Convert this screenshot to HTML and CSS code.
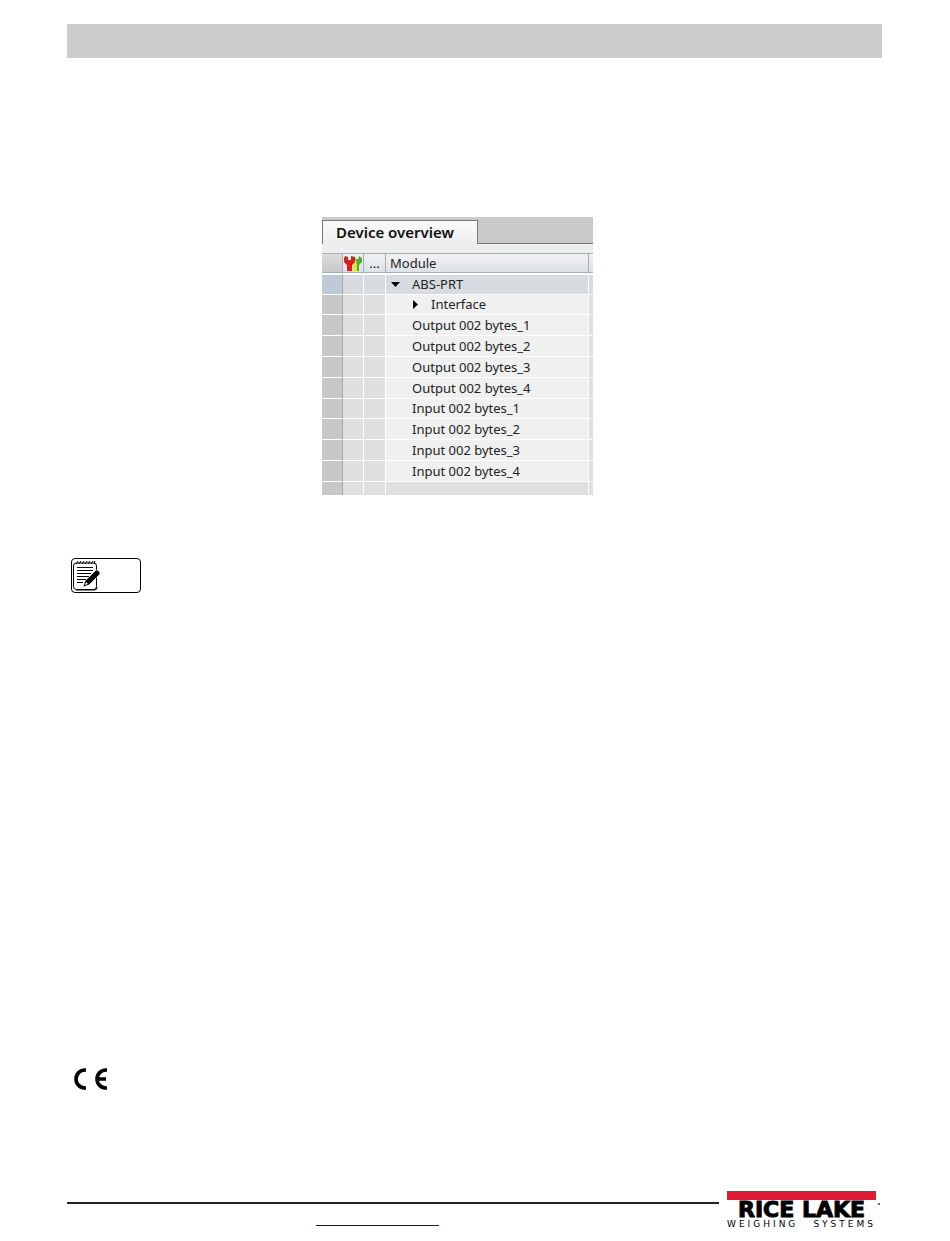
FILE: index.html
```html
<!DOCTYPE html>
<html lang="en">
<head>
  <meta charset="utf-8">
  <title>Device overview</title>
  <link rel="stylesheet" href="styles.css">
</head>
<body>
<header class="title-bar"></header>

<main>
  <section class="device">
    <div class="tabs">
      <button class="tab" type="button">Device overview</button>
    </div>
    <table class="modules">
      <thead>
        <tr>
          <th class="col-mark"></th>
          <th class="col-state">
            <svg class="wrenches" viewBox="0 0 18 17">
              <path fill="#4fae32" d="M10 1l2 3h2l1-3 3 2v4l-3 3v6h-4v-6L9 7z"/>
              <path fill="#e8e23a" d="M9 3l3 2 1 4v7H9z"/>
              <path fill="#d3201f" d="M1 1l3 1v3h3V1l4 1v5L8 10v6H3v-6L0 7V3z"/>
            </svg>
          </th>
          <th class="col-more">...</th>
          <th class="col-module">Module</th>
          <th class="col-end"></th>
        </tr>
      </thead>
      <tbody>
        <tr class="selected"><td></td><td></td><td></td><td class="name root"><svg class="arrow" viewBox="0 0 9 9"><path d="M0 2h9L4.500 7z"/></svg>ABS-PRT</td><td></td></tr>
        <tr><td></td><td></td><td></td><td class="name child"><svg class="arrow" viewBox="0 0 9 9"><path d="M2 0v9l5-4.500z"/></svg>Interface</td><td></td></tr>
        <tr><td></td><td></td><td></td><td class="name">Output 002 bytes_1</td><td></td></tr>
        <tr><td></td><td></td><td></td><td class="name">Output 002 bytes_2</td><td></td></tr>
        <tr><td></td><td></td><td></td><td class="name">Output 002 bytes_3</td><td></td></tr>
        <tr><td></td><td></td><td></td><td class="name">Output 002 bytes_4</td><td></td></tr>
        <tr><td></td><td></td><td></td><td class="name">Input 002 bytes_1</td><td></td></tr>
        <tr><td></td><td></td><td></td><td class="name">Input 002 bytes_2</td><td></td></tr>
        <tr><td></td><td></td><td></td><td class="name">Input 002 bytes_3</td><td></td></tr>
        <tr><td></td><td></td><td></td><td class="name">Input 002 bytes_4</td><td></td></tr>
        <tr class="empty"><td></td><td></td><td></td><td></td><td></td></tr>
      </tbody>
    </table>
  </section>

  <div class="note">
    <svg class="notepad" viewBox="0 0 30 33">
      <rect x="1.500" y="4" width="23" height="26.500" rx="3" fill="#fff" stroke="#000"/>
      <path d="M4 31h19q2 0 2-3" fill="none" stroke="#000"/>
      <path d="M4 5l2-3M7 5l2-3M10 5l2-3M13 5l2-3M16 5l2-3M19 5l2-3M22 5l1-3" stroke="#000"/>
      <path d="M5 8.500h16M5 11.500h16M5 14.500h14M5 17.500h12M5 20.500h9M5 23.500h6" stroke="#000"/>
      <path d="M11 28l2-6L24 11q4 0 4 4L17 26z" fill="#000" stroke="#fff" stroke-width="0.600"/>
      <path d="M13 26l1-3 2 2z" fill="#fff"/>
    </svg>
  </div>

  <svg class="ce-mark" viewBox="0 0 36 22" role="img" aria-label="CE">
    <path d="M14 2h-1a9 9 0 0 0 0 18h1M35 2h-1a9 9 0 0 0 0 18h1M26 11h8" fill="none" stroke="#000" stroke-width="3.600"/>
  </svg>
</main>

<footer class="footer">
  <div class="rule">
    <a class="site-link" href="#" aria-label="Website"></a>
  </div>
  <div class="logo">
    <div class="logo-bar"></div>
    <div class="logo-name">RICE LAKE</div>
    <div class="logo-sub"><span>WEIGHING</span><span>SYSTEMS</span></div>
    <span class="logo-dot"></span>
  </div>
</footer>
</body>
</html>
```
FILE: styles.css
```css
body {
    margin: 0;
    padding: 24px 68px 0 67px;
    background-color: white;
    font-family: "Noto Sans", "Open Sans", sans-serif;
    font-size: 13px;
    color: #222;
}

.title-bar {
    height: 34px;
    background-color: #ccc;
}

main {
    padding-right: 34px;
}

/* Device overview panel */
.device {
    width: 271px;
    margin: 159px auto 0;
    background-color: #eee;
}

.tabs {
    display: flex;
    height: 27px;
    padding-top: 3px;
    box-sizing: border-box;
    border-bottom: 1px solid #777;
    background-color: #cacaca;
}

.tab {
    height: 24px;
    box-sizing: border-box;
    width: 156px;
    padding: 0 0 2px 13px;
    border: 1px solid #777;
    border-bottom: 0;
    background: linear-gradient(#fafafa, #eee);
    color: #111;
    font: 600 15px/20px "Noto Sans", sans-serif;
    text-align: left;
    white-space: nowrap;
}

.modules {
    width: 100%;
    margin-top: 9px;
    border-collapse: separate;
    border-spacing: 0;
    table-layout: fixed;
}

.modules th {
    height: 20px;
    box-sizing: border-box;
    padding: 0;
    border: solid #a4adb5;
    border-width: 1px 1px 1px 0;
    background: linear-gradient(#f2f2f3, #dde2e9);
    font-weight: normal;
    line-height: 18px;
    text-align: left;
}

.modules .col-mark {
    width: 21px;
    background: linear-gradient(#dcdcdc, #c8c8c8);
}

.modules .col-state {
    width: 21px;
}

.modules .col-more {
    width: 22px;
    text-align: center;
}

.modules .col-module {
    padding-left: 4px;
}

.modules .col-end {
    width: 4px;
    border-right: 0;
}

.wrenches {
    display: block;
    width: 18px;
    height: 17px;
    margin: 0 auto;
}

.modules td {
    height: 21px;
    box-sizing: border-box;
    padding: 0;
    border: solid white;
    border-width: 0 1px 1px 0;
    background-color: #dfdfdf;
    line-height: 19px;
}

.modules td:first-child {
    border-right-color: #aaa;
    background-color: #c8c8c8;
}

.modules td:last-child {
    border-right: 0;
}

.modules tr:nth-child(5n+2) td {
    height: 20px;
}

.modules .name {
    padding-left: 26px;
    background-color: #f0f0f0;
    white-space: nowrap;
}

.modules .root {
    padding-left: 5px;
}

.modules .child {
    padding-left: 25px;
}

.arrow {
    width: 9px;
    height: 9px;
    margin-right: 12px;
}

.child .arrow {
    margin-right: 11px;
}

.modules .selected td {
    height: 22px;
    border-top: 2px solid white;
    background-color: #d8dce1;
}

.modules .selected td:first-child {
    background-color: #bfcad8;
}

.modules .empty td {
    height: 13px;
    border-bottom: 0;
}

/* Note box and CE mark */
.note {
    width: 70px;
    height: 35px;
    box-sizing: border-box;
    margin: 63px 0 0 4px;
    border: 1px solid black;
    border-radius: 4px;
}

.notepad {
    display: block;
    width: 30px;
    height: 33px;
}

.ce-mark {
    display: block;
    width: 36px;
    height: 22px;
    margin: 475px 0 0 5px;
}

.footer {
    display: flex;
    gap: 8px;
    margin-top: 101px;
}

.rule {
    flex: 1;
    margin-top: 11px;
    border-top: 2px solid #222;
}

.site-link {
    display: block;
    width: 123px;
    height: 21px;
    margin-left: 249px;
    border-bottom: 1px solid #00f;
}

.logo {
    position: relative;
    width: 149px;
    margin-right: 6px;
    color: black;
}

.logo-bar {
    height: 9px;
    background-color: #df1a32;
}

.logo-name {
    font: bold 22px/20px "DejaVu Sans", sans-serif;
    -webkit-text-stroke: 1px black;
    white-space: nowrap;
    text-align: center;
}

.logo-sub {
    display: flex;
    justify-content: space-between;
    font: 9px/8px "DejaVu Sans", sans-serif;
    letter-spacing: 3px;
}

.logo-dot {
    position: absolute;
    top: 12px;
    right: -4px;
    width: 2px;
    height: 2px;
    border-radius: 50%;
    background-color: #333;
}
```
